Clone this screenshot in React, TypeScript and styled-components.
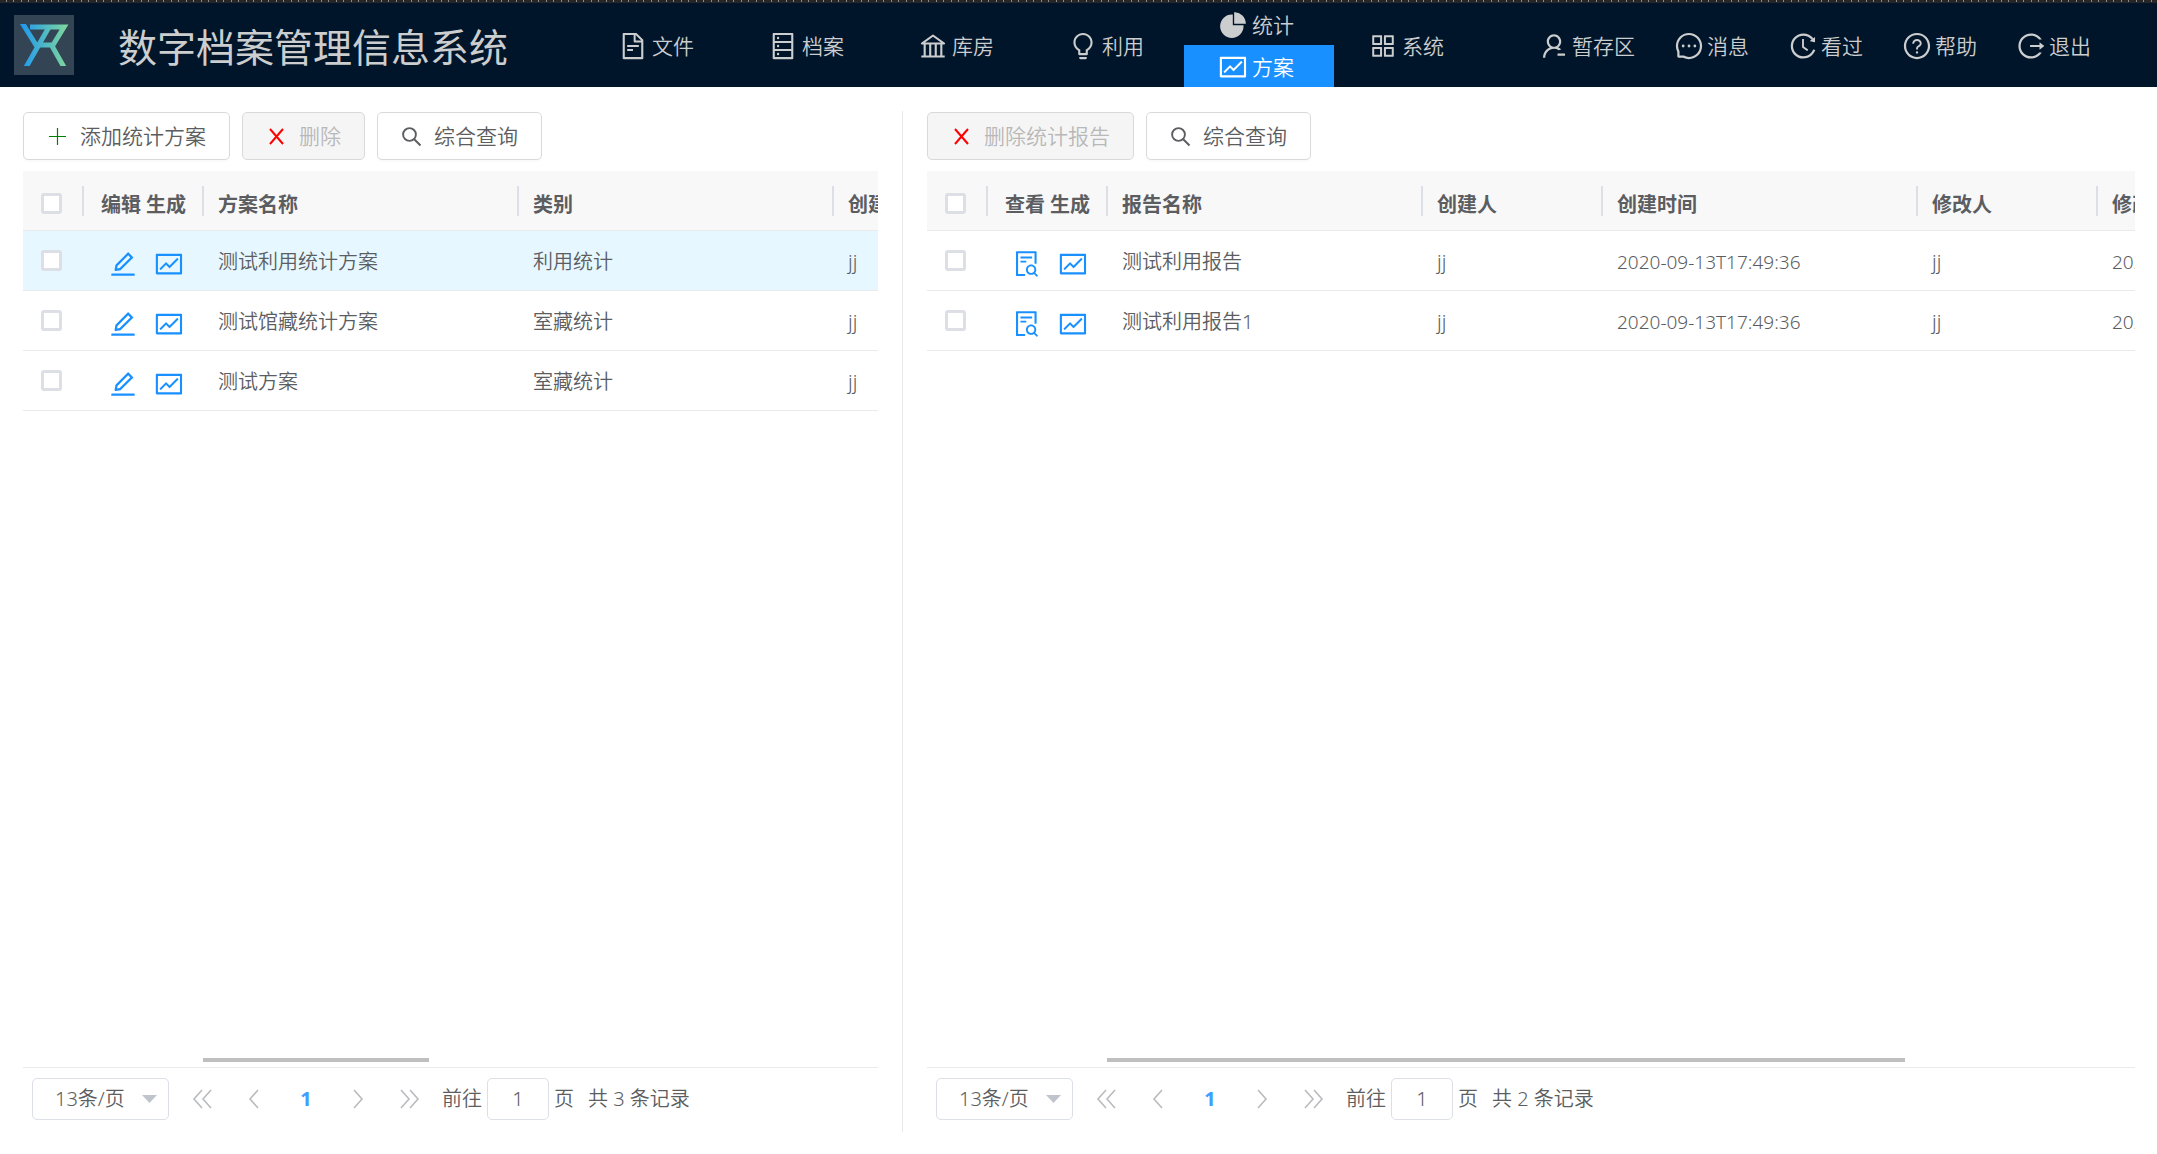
import React, { useId, useState } from 'react';
import styled, { createGlobalStyle, css } from 'styled-components';
import {
  AiFillPieChart,
  AiOutlineAppstore,
  AiOutlineBank,
  AiOutlineBulb,
  AiOutlineDatabase,
  AiOutlineEdit,
  AiOutlineFileSearch,
  AiOutlineFileText,
  AiOutlineFund,
  AiOutlineHistory,
  AiOutlineLogout,
  AiOutlineMessage,
  AiOutlineQuestionCircle,
  AiOutlineUserDelete,
} from 'react-icons/ai';

const GlobalStyle = createGlobalStyle`
  *, *::before, *::after { box-sizing: border-box; }
  body {
    margin: 0;
    background: #fff;
    color: #5b5d61;
    font: 350 20px/28px "Noto Sans", "Noto Sans CJK SC", sans-serif;
  }
  button, input, select { font: inherit; color: inherit; margin: 0; }
  a { color: inherit; text-decoration: none; }
`;

const Page = styled.div`
  display: flex;
  flex-direction: column;
  height: 100vh;
  min-height: 600px;
`;

const Ruler = styled.div`
  flex: none;
  height: 3px;
  background:
    repeating-linear-gradient(90deg, transparent 0 6px, #8a8a8a 6px 7px, transparent 7px 13px, #8a8a8a 13px 14px, transparent 14px 15px) 0 0 / 100% 2px no-repeat,
    #262626;
`;

const Header = styled.header`
  flex: none;
  display: flex;
  align-items: center;
  height: 84px;
  padding: 0 66px 0 14px;
  background: #001529;
  color: #cccdcf;
`;

const Logo = styled.svg`
  flex: none;
  width: 60px;
  height: 60px;
  background: #334454;
`;

const Title = styled.h1`
  flex: none;
  margin: 0 76px 0 44px;
  padding-top: 4px;
  font-size: 39px;
  line-height: 56px;
  font-weight: 400;
  white-space: nowrap;
`;

const Nav = styled.nav`
  display: flex;
  align-self: stretch;
`;

const NavGroup = styled.div`
  display: flex;
  flex-direction: column;
  width: 150px;
`;

const NavLink = styled.a<{ $active?: boolean }>`
  flex: 1;
  display: flex;
  align-items: center;
  justify-content: center;
  gap: 4px;
  padding: 1px 6px 0 0;
  font-size: 21px;
  white-space: nowrap;
  svg { width: 30px; height: 30px; }
  ${p => p.$active && css`
    background: #1890ff;
    color: #fff;
  `}
`;

const Actions = styled.div`
  display: flex;
  gap: 39px;
  margin-left: auto;
  padding-top: 2px;
`;

const ActionLink = styled.a`
  display: flex;
  align-items: center;
  gap: 3px;
  font-size: 21px;
  white-space: nowrap;
  svg { width: 30px; height: 30px; }
`;

const Main = styled.main`
  flex: 1;
  min-height: 0;
  display: grid;
  grid-template-columns: minmax(0, 10fr) minmax(0, 14fr);
  padding: 24px 22px 22px 23px;
`;

const Pane = styled.section<{ $divided?: boolean }>`
  display: flex;
  flex-direction: column;
  min-width: 0;
  padding: 1px 0 0 24px;
  ${p => p.$divided && css`
    padding: 1px 24px 0 0;
    border-right: 1px solid #e8e8e8;
  `}
`;

const Toolbar = styled.div`
  display: flex;
  gap: 12px;
  margin-bottom: 11px;
`;

const ToolButton = styled.button`
  display: flex;
  align-items: center;
  gap: 12px;
  height: 48px;
  padding: 0 23px;
  border: 1px solid #d9d9d9;
  border-radius: 5px;
  background: #fff;
  box-shadow: 0 2px 0 rgba(0, 0, 0, 0.02);
  font-size: 21px;
  white-space: nowrap;
  svg { width: 21px; height: 21px; }
  &:disabled {
    background: #f5f5f5;
    color: #b8b8b8;
    box-shadow: none;
  }
`;

const TableArea = styled.div`
  flex: 1;
  min-height: 0;
  display: flex;
  flex-direction: column;
  overflow: hidden;
  border-bottom: 1px solid #e8eaec;
`;

const Grid = styled.table`
  table-layout: fixed;
  border-collapse: separate;
  border-spacing: 0;
  width: 0;
`;

const Th = styled.th<{ $center?: boolean }>`
  height: 60px;
  padding: ${p => (p.$center ? '8px 1px 0 0' : '8px 0 0 14px')};
  text-align: ${p => (p.$center ? 'center' : 'left')};
  font-weight: 700;
  white-space: nowrap;
  border-bottom: 1px solid #e8eaec;
  background: linear-gradient(#dcdfe6, #dcdfe6) right 0 top 15px / 2px 30px no-repeat, #f8f8f9;
`;

const Row = styled.tr<{ $current?: boolean }>`
  background: ${p => (p.$current ? '#e6f7ff' : '#fff')};
`;

const Td = styled.td<{ $center?: boolean; $code?: boolean }>`
  height: 60px;
  padding: ${p => (p.$center ? '0 1px 0 0' : '3px 0 0 14px')};
  font-size: ${p => (p.$code ? '19px' : '20px')};
  white-space: nowrap;
  border-bottom: 1px solid #e8eaec;
`;

const Check = styled.input`
  appearance: none;
  display: block;
  width: 21px;
  height: 21px;
  margin: 0 auto;
  border: 3px solid #dcdfe6;
  border-radius: 3px;
  background: #fff;
  &:checked { background: #1890ff; border-color: #1890ff; }
`;

const CheckTh = styled(Th)`
  padding: 5px 4px 0 0;
`;

const CheckTd = styled(Td)`
  padding: 0 4px 0 0;
`;

const RowActions = styled.div`
  display: flex;
  justify-content: center;
  gap: 16px;
  padding: 6px 0 0 4px;
`;

const IconButton = styled.button`
  display: flex;
  padding: 0;
  border: 0;
  background: none;
  color: #1890ff;
  svg { width: 30px; height: 30px; }
`;

const Track = styled.div`
  flex: none;
  height: 4px;
  margin: auto 0 5px 180px;
`;

const Thumb = styled.div<{ $share: number }>`
  width: ${p => p.$share}%;
  height: 4px;
  background: #bfbfbf;
`;

const Pager = styled.footer`
  flex: none;
  display: flex;
  align-items: center;
  height: 64px;
  padding: 0 0 3px 9px;
`;

const SizeBox = styled.div`
  position: relative;
  width: 137px;
  height: 42px;
  svg {
    position: absolute;
    right: 12px;
    top: 17px;
    width: 15px;
    height: 8px;
    pointer-events: none;
  }
`;

const SizeSelect = styled.select`
  appearance: none;
  width: 100%;
  height: 100%;
  padding: 0 0 0 22px;
  border: 1px solid #dcdfe6;
  border-radius: 5px;
  background: #fff;
`;

const Pages = styled.div`
  display: flex;
  margin: 0 6px 0 7px;
`;

const PageButton = styled.button<{ $current?: boolean }>`
  display: flex;
  align-items: center;
  justify-content: center;
  width: 52px;
  height: 42px;
  padding: 0;
  border: 0;
  background: none;
  color: #b9bbbf;
  ${p => p.$current && css`
    color: #409eff;
    font-weight: 700;
  `}
`;

const Jump = styled.label`
  display: flex;
  align-items: center;
  gap: 5px;
  white-space: nowrap;
`;

const JumpInput = styled.input`
  width: 62px;
  height: 42px;
  border: 1px solid #dcdfe6;
  border-radius: 5px;
  background: #fff;
  text-align: center;
`;

const Total = styled.span`
  margin-left: 14px;
  white-space: nowrap;
`;

const PlusIcon = () => (
  <svg viewBox="0 0 21 21" fill="none" stroke="#008000" aria-hidden="true">
    <path d="M2 10.5h17M10.5 2v17" strokeWidth="1.2" />
  </svg>
);

const CrossIcon = () => (
  <svg viewBox="0 0 21 21" fill="none" stroke="#f00" aria-hidden="true">
    <path d="M4 3l13 15M17 3L4 18" strokeWidth="2" />
  </svg>
);

const SearchIcon = () => (
  <svg viewBox="0 0 21 21" fill="none" stroke="currentColor" strokeWidth="1.9" aria-hidden="true">
    <circle cx="8.5" cy="8.5" r="6.4" />
    <path d="M13 13l6.5 6.5" />
  </svg>
);

const Chevron = ({ d }: { d: string }) => (
  <svg width="22" height="20" viewBox="0 0 22 20" fill="none" stroke="currentColor" strokeWidth="1.6" aria-hidden="true">
    <path d={d} />
  </svg>
);

const BrandMark = () => (
  <Logo viewBox="0 0 60 60" role="img" aria-label="YR">
    <defs>
      <linearGradient id="brand" x1="6" y1="0" x2="54" y2="0" gradientUnits="userSpaceOnUse">
        <stop offset="0" stopColor="#1c96f2" />
        <stop offset="1" stopColor="#7fd99a" />
      </linearGradient>
      <clipPath id="brand-edge"><rect x="5" y="9" width="50" height="42" /></clipPath>
    </defs>
    <g fill="none" stroke="url(#brand)" strokeWidth="5" clipPath="url(#brand-edge)">
      <path d="M7 6L22 30H39L50 12H16" />
      <path d="M35 12L11 54M38 31L51 54" />
    </g>
  </Logo>
);

type Item = { label: string; icon: React.ReactNode };

const menu: { items: Item[] }[] = [
  { items: [{ label: '文件', icon: <AiOutlineFileText /> }] },
  { items: [{ label: '档案', icon: <AiOutlineDatabase /> }] },
  { items: [{ label: '库房', icon: <AiOutlineBank /> }] },
  { items: [{ label: '利用', icon: <AiOutlineBulb /> }] },
  { items: [{ label: '统计', icon: <AiFillPieChart /> }, { label: '方案', icon: <AiOutlineFund /> }] },
  { items: [{ label: '系统', icon: <AiOutlineAppstore /> }] },
];

const actions: Item[] = [
  { label: '暂存区', icon: <AiOutlineUserDelete /> },
  { label: '消息', icon: <AiOutlineMessage /> },
  { label: '看过', icon: <AiOutlineHistory /> },
  { label: '帮助', icon: <AiOutlineQuestionCircle /> },
  { label: '退出', icon: <AiOutlineLogout /> },
];

type Column = { title: string; width: number; code?: boolean };

type TableProps = {
  actionTitle: string;
  firstAction: Item;
  columns: Column[];
  rows: string[][];
  current?: number;
  thumb: number;
};

function DataTable({ actionTitle, firstAction, columns, rows, current, thumb }: TableProps) {
  return (
    <TableArea>
      <Grid>
        <colgroup>
          <col style={{ width: 61 }} />
          <col style={{ width: 120 }} />
          {columns.map(c => <col key={c.title} style={{ width: c.width }} />)}
        </colgroup>
        <thead>
          <tr>
            <CheckTh><Check type="checkbox" aria-label="全选" /></CheckTh>
            <Th $center>{actionTitle}</Th>
            {columns.map(c => <Th key={c.title}>{c.title}</Th>)}
          </tr>
        </thead>
        <tbody>
          {rows.map((row, r) => (
            <Row key={row[0]} $current={r === current}>
              <CheckTd><Check type="checkbox" aria-label={row[0]} /></CheckTd>
              <Td $center>
                <RowActions>
                  <IconButton type="button" aria-label={firstAction.label}>{firstAction.icon}</IconButton>
                  <IconButton type="button" aria-label="生成"><AiOutlineFund /></IconButton>
                </RowActions>
              </Td>
              {row.map((cell, i) => <Td key={columns[i].title} $code={columns[i].code}>{cell}</Td>)}
            </Row>
          ))}
        </tbody>
      </Grid>
      <Track><Thumb $share={thumb} /></Track>
    </TableArea>
  );
}

function Pagination({ total }: { total: number }) {
  const [page, setPage] = useState('1');
  const id = useId();
  return (
    <Pager>
      <SizeBox>
        <SizeSelect aria-label="每页条数" defaultValue="13">
          <option value="13">13条/页</option>
          <option value="20">20条/页</option>
        </SizeSelect>
        <svg viewBox="0 0 15 8" aria-hidden="true"><path d="M0 0h15L7.5 8z" fill="#c0c4cc" /></svg>
      </SizeBox>
      <Pages>
        <PageButton type="button" aria-label="首页"><Chevron d="M11 1L3 10l8 9M20 1l-8 9 8 9" /></PageButton>
        <PageButton type="button" aria-label="上一页"><Chevron d="M15 1L7 10l8 9" /></PageButton>
        <PageButton type="button" $current>1</PageButton>
        <PageButton type="button" aria-label="下一页"><Chevron d="M7 1l8 9-8 9" /></PageButton>
        <PageButton type="button" aria-label="末页"><Chevron d="M2 1l8 9-8 9M11 1l8 9-8 9" /></PageButton>
      </Pages>
      <Jump htmlFor={id}>
        前往
        <JumpInput id={id} value={page} onChange={e => setPage(e.target.value)} />
        页
      </Jump>
      <Total>共 {total} 条记录</Total>
    </Pager>
  );
}

export default function App() {
  return (
    <>
      <GlobalStyle />
      <Page>
        <Ruler />
        <Header>
          <BrandMark />
          <Title>数字档案管理信息系统</Title>
          <Nav>
            {menu.map(group => (
              <NavGroup key={group.items[0].label}>
                {group.items.map((item, i) => (
                  <NavLink key={item.label} href="#" $active={i === 1}>{item.icon}{item.label}</NavLink>
                ))}
              </NavGroup>
            ))}
          </Nav>
          <Actions>
            {actions.map(item => (
              <ActionLink key={item.label} href="#">{item.icon}{item.label}</ActionLink>
            ))}
          </Actions>
        </Header>
        <Main>
          <Pane $divided>
            <Toolbar>
              <ToolButton type="button"><PlusIcon />添加统计方案</ToolButton>
              <ToolButton type="button" disabled><CrossIcon />删除</ToolButton>
              <ToolButton type="button"><SearchIcon />综合查询</ToolButton>
            </Toolbar>
            <DataTable
              actionTitle="编辑 生成"
              firstAction={{ label: '编辑', icon: <AiOutlineEdit /> }}
              columns={[
                { title: '方案名称', width: 315 },
                { title: '类别', width: 315 },
                { title: '创建人', width: 180 },
              ]}
              rows={[
                ['测试利用统计方案', '利用统计', 'jj'],
                ['测试馆藏统计方案', '室藏统计', 'jj'],
                ['测试方案', '室藏统计', 'jj'],
              ]}
              current={0}
              thumb={33.5}
            />
            <Pagination total={3} />
          </Pane>
          <Pane>
            <Toolbar>
              <ToolButton type="button" disabled><CrossIcon />删除统计报告</ToolButton>
              <ToolButton type="button"><SearchIcon />综合查询</ToolButton>
            </Toolbar>
            <DataTable
              actionTitle="查看 生成"
              firstAction={{ label: '查看', icon: <AiOutlineFileSearch /> }}
              columns={[
                { title: '报告名称', width: 315 },
                { title: '创建人', width: 180 },
                { title: '创建时间', width: 315, code: true },
                { title: '修改人', width: 180 },
                { title: '修改时间', width: 315, code: true },
              ]}
              rows={[
                ['测试利用报告', 'jj', '2020-09-13T17:49:36', 'jj', '2020-09-13T17:49:36'],
                ['测试利用报告1', 'jj', '2020-09-13T17:49:36', 'jj', '2020-09-13T17:49:36'],
              ]}
              thumb={77.6}
            />
            <Pagination total={2} />
          </Pane>
        </Main>
      </Page>
    </>
  );
}
